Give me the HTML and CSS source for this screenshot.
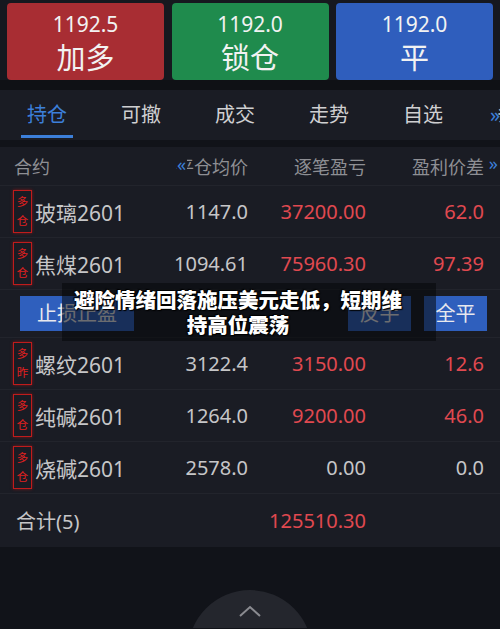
FILE: index.html
```html
<!DOCTYPE html>
<html lang="zh">
<head>
<meta charset="utf-8">
<link rel="stylesheet" href="styles.css">
</head>
<body>
<div class="page">
  <div class="actions">
    <div class="act red"><span class="price">1192.5</span><span class="label">加多</span></div>
    <div class="act green"><span class="price">1192.0</span><span class="label">锁仓</span></div>
    <div class="act blue"><span class="price">1192.0</span><span class="label">平</span></div>
  </div>
  <div class="tabs">
    <div class="tab active">持仓</div>
    <div class="tab">可撤</div>
    <div class="tab">成交</div>
    <div class="tab">走势</div>
    <div class="tab">自选</div>
    <div class="tab more"><span class="arrow">»</span><span class="clip">条件单</span></div>
  </div>
  <div class="table">
    <div class="row head">
      <div class="c-name">合约</div>
      <div class="c-price"><span class="larrow">«</span>平仓均价</div>
      <div class="c-pl">逐笔盈亏</div>
      <div class="c-diff">盈利价差<span class="rarrow">»</span></div>
    </div>
    <div class="row">
      <div class="c-name"><span class="badge">多<br>仓</span>玻璃2601</div>
      <div class="c-price">1147.0</div>
      <div class="c-pl up">37200.00</div>
      <div class="c-diff up">62.0</div>
    </div>
    <div class="row">
      <div class="c-name"><span class="badge">多<br>仓</span>焦煤2601</div>
      <div class="c-price">1094.61</div>
      <div class="c-pl up">75960.30</div>
      <div class="c-diff up">97.39</div>
    </div>
    <div class="row ops">
      <div class="btn wide">止损止盈</div>
      <div class="spacer"></div>
      <div class="btn">反手</div>
      <div class="btn">全平</div>
    </div>
    <div class="row">
      <div class="c-name"><span class="badge">多<br>昨</span>螺纹2601</div>
      <div class="c-price">3122.4</div>
      <div class="c-pl up">3150.00</div>
      <div class="c-diff up">12.6</div>
    </div>
    <div class="row">
      <div class="c-name"><span class="badge">多<br>仓</span>纯碱2601</div>
      <div class="c-price">1264.0</div>
      <div class="c-pl up">9200.00</div>
      <div class="c-diff up">46.0</div>
    </div>
    <div class="row">
      <div class="c-name"><span class="badge">多<br>仓</span>烧碱2601</div>
      <div class="c-price">2578.0</div>
      <div class="c-pl">0.00</div>
      <div class="c-diff">0.0</div>
    </div>
    <div class="row total">
      <div class="c-name">合计(5)</div>
      <div class="c-price"></div>
      <div class="c-pl up">125510.30</div>
      <div class="c-diff"></div>
    </div>
  </div>
  <div class="bottom">
    <div class="fab">
      <svg width="24" height="14" viewBox="0 0 24 14"><path d="M2 12 L12 3 L22 12" fill="none" stroke="#8a8b90" stroke-width="2"/></svg>
    </div>
  </div>
  <div class="caption">避险情绪回落施压美元走低，短期维<br>持高位震荡</div>
</div>
</body>
</html>
```

FILE: styles.css
```css
* { box-sizing: border-box; }
html, body { margin: 0; padding: 0; }
body {
  width: 500px;
  height: 629px;
  overflow: hidden;
  background: #111319;
  font-family: "Noto Sans", "Noto Sans CJK SC", sans-serif;
  color: #c6c6c8;
}
.page { position: relative; width: 500px; height: 629px; }

.actions {
  display: grid;
  grid-template-columns: 157px 157px 157px;
  column-gap: 7.5px;
  padding: 3px 7px 0 7px;
  height: 80px;
  background: #16181f;
  border-bottom: 10px solid #0f1115;
  box-sizing: content-box;
  height: 77px;
}
.act {
  height: 77px;
  border-radius: 4px;
  display: flex;
  flex-direction: column;
  align-items: center;
  color: #f2f2f2;
}
.act .price { font-size: 21px; line-height: 24px; margin-top: 9px; }
.act .label { font-size: 29px; line-height: 34px; margin-top: 5px; }
.red { background: #a82d33; }
.green { background: #1f8b4d; }
.blue { background: #2f5ebd; }

.tabs {
  display: flex;
  height: 50px;
  background: #1a1c24;
  position: relative;
  overflow: hidden;
  margin-bottom: 7px;
}
.tab {
  width: 94px;
  flex: none;
  text-align: center;
  font-size: 20px;
  line-height: 50px;
  color: #cfcfd1;
  position: relative;
}
.tab.active { color: #3c7fd9; }
.tab.active::after {
  content: "";
  position: absolute;
  left: 21px;
  width: 52px;
  bottom: 2px;
  height: 3px;
  background: #3c7fd9;
}
.tab.more { text-align: left; padding-left: 20px; color: #b8b8ba; width: 40px; overflow: hidden; white-space: nowrap; }
.tab.more .arrow { color: #3c7fd9; position: relative; z-index: 1; }
.tab.more .clip { margin-left: -3px; }

.table { background: #1a1c24; }
.row {
  display: flex;
  align-items: center;
  height: 52px;
  border-bottom: 1px solid #22242c;
  font-size: 20px;
}
.row.head { height: 39px; font-size: 18px; color: #8e8f94; }
.c-name { width: 140px; padding-left: 14px; display: flex; align-items: center; font-size: 21px; white-space: nowrap; }
.row.head .c-name { padding-left: 14px; font-size: 18px; }
.c-price { width: 108px; text-align: right; position: relative; }
.c-pl { width: 118px; text-align: right; }
.c-diff { width: 118px; text-align: right; position: relative; }
.up { color: #e04950; }
.larrow {
  position: absolute;
  left: 37px;
  top: -2px;
  width: 10px;
  text-align: left;
  color: #3c7fd9;
  background: #1a1c24;
  line-height: 26px;
}
.rarrow {
  position: absolute;
  right: -14px;
  top: -2px;
  color: #3c7fd9;
}
.badge {
  display: inline-block;
  flex: none;
  width: 19px;
  height: 43px;
  border: 1.5px solid #c01c1c;
  box-shadow: 0 0 3px rgba(200, 20, 20, 0.6);
  color: #e02020;
  font-size: 11.5px;
  line-height: 19px;
  text-align: center;
  padding-top: 1px;
  margin-right: 3px;
  margin-left: -1px;
}
.row.ops { height: 48px; background: #1a1c24; }
.btn {
  width: 63px;
  height: 35px;
  background: #2f5fbd;
  color: #e8e8ee;
  font-size: 20px;
  line-height: 35px;
  text-align: center;
  margin-right: 13px;
}
.btn.wide { width: 114px; margin-left: 20px; }
.spacer { flex: 1; }
.row.total { height: 53px; border-bottom: none; }
.row.total .c-name { padding-left: 16px; font-size: 20px; }

.bottom {
  height: 81px;
  position: relative;
  overflow: hidden;
}
.fab {
  position: absolute;
  left: 188px;
  top: 43px;
  width: 124px;
  height: 124px;
  border-radius: 50%;
  background: #24262d;
  display: flex;
  justify-content: center;
  padding-top: 14px;
}
.fab svg { display: block; }

.caption {
  position: absolute;
  left: 62px;
  top: 283px;
  width: 374px;
  height: 58px;
  background: rgba(6, 7, 10, 0.55);
  color: #ffffff;
  font-weight: 900;
  font-size: 20.5px;
  line-height: 25px;
  text-align: center;
  padding-top: 4px;
  padding-right: 22px;
  text-shadow: 0 0 2px #000, 1px 1px 1px #000, -1px -1px 1px #000;
  font-family: "Noto Sans CJK SC", sans-serif;
}
```
